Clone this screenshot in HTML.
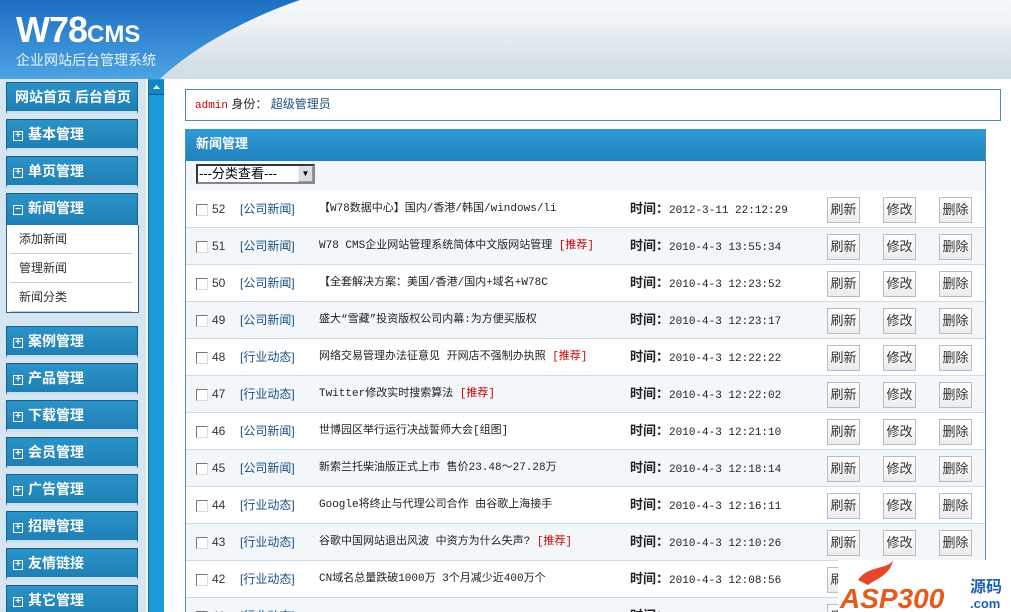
<!DOCTYPE html>
<html><head><meta charset="utf-8"><style>
*{margin:0;padding:0;box-sizing:border-box}
html{overflow:hidden;height:612px}
body{width:1011px;height:612px;overflow:hidden;background:#fff;font-family:"Liberation Sans","Noto Sans CJK SC",sans-serif;font-size:12px;position:relative}
.hdr{position:absolute;left:0;top:0;width:1011px;height:79px;background:linear-gradient(#f7f8f9,#eef2f5 30%,#dfe7ee 60%,#cfdde2)}
.blue{position:absolute;left:0;top:0;width:1011px;height:79px}
.logo{position:absolute;left:16px;top:9px;color:#fff;font-weight:bold;font-size:36px;font-family:"Liberation Sans",sans-serif;letter-spacing:-1px}
.logo small{font-size:24px;letter-spacing:0}
.sub{position:absolute;left:16px;top:50px;color:#eaf4fb;font-size:14px}
.side{position:absolute;left:0;top:79px;width:146px;height:533px;background:#d5e5f1}
.m{position:absolute;left:6px;width:132px;height:32px;background:linear-gradient(#2b93c8,#1f7fb5);border:1px solid #1a5f86;color:#fff;font-weight:bold;font-size:14px;line-height:28px;padding-left:6px;border-bottom:3px solid #c9e2f0}
.m i{font-style:normal;display:inline-block;width:10px;height:10px;border:1px solid #fff;font-size:10px;line-height:8px;text-align:center;margin-right:5px;vertical-align:1px}
.subm{position:absolute;left:6px;top:225px;width:133px;height:88px;background:#fff;border:1px solid #33667f;border-top:none}
.subm div{height:29px;line-height:28px;padding-left:8px;color:#333;border-bottom:1px solid #b8cfdc;margin:0 6px 0 4px;font-size:12px}
.sb{position:absolute;left:148px;top:79px;width:16px;height:533px;background:#1a9ad6;border-left:1px solid #0d6ea0}
.sb .up{position:absolute;left:0;top:1px;width:15px;height:15px;background:#0f87c5;border-bottom:1px solid #084f78}
.info{position:absolute;left:185px;top:89px;width:816px;height:32px;border:1px solid #4a8fa6;line-height:28px;padding-left:9px;font-size:12px;color:#1a4f7a}
.panel{position:absolute;left:185px;top:129px;width:801px;height:483px;border:1px solid #5d8ba8;border-top:none;border-bottom:none;overflow:hidden}
.ph{height:32px;background:linear-gradient(#2e9bd6,#1f82bd);color:#fff;font-weight:bold;font-size:13px;line-height:30px;padding-left:10px}
.sel{height:30px;background:#f3f6fa;padding:3px 0 0 10px}
.sel span{display:inline-block;width:119px;height:20px;border:2px inset #888;background:#fff;font-size:13px;line-height:16px;position:relative;padding-left:1px}
.sel span b{position:absolute;right:0;top:0;width:15px;height:16px;background:#ddd;border:1px outset #eee;font-size:8px;text-align:center;line-height:14px}
.row{position:absolute;left:0;width:800px;height:37px;border-bottom:1px solid #c8dde9;font-size:12px;line-height:36px;background:#fff}
.row:nth-child(even){background:#f4f7fa}
.row>*{position:absolute;top:0}
.cb{left:10px;top:13px!important;width:12px;height:12px;border:1px solid #777;border-right-color:#ddd;border-bottom-color:#ddd;background:#fff}
.n{left:26px;color:#333}
.c{left:54px;color:#1b4e84}
.t{left:133px;color:#222;font-family:"Liberation Mono","Noto Sans CJK SC",monospace}
.t,.t *{font-size:11px}
.r{color:#c00}
.tm{left:444px;color:#222;font-family:"Liberation Mono",monospace;font-size:11px}
.tm b{font-family:"Liberation Sans","Noto Sans CJK SC",sans-serif;font-size:13px}
.btn{top:6px!important;width:33px;height:26px;border:1px solid #bbb;background:linear-gradient(#fff,#ececec);line-height:24px;text-align:center;color:#333;font-size:13px}
.wm{position:absolute;left:838px;top:560px;width:173px;height:52px;background:#fff}
</style></head><body>
<div class="hdr"></div>
<svg class="blue" viewBox="0 0 1011 79"><defs><linearGradient id="g" x1="0" y1="0" x2="0" y2="1"><stop offset="0" stop-color="#1d6fc4"/><stop offset="1" stop-color="#4ca3e0"/></linearGradient></defs><path d="M0 0H300C255 15 195 45 160 79H0Z" fill="url(#g)"/></svg>
<div class="logo">W78<small>CMS</small></div>
<div class="sub">企业网站后台管理系统</div>
<div class="side"></div>
<div class="m" style="top:82px;font-size:14px;padding-left:8px">网站首页 后台首页</div>
<div class="m" style="top:119px"><i>+</i>基本管理</div>
<div class="m" style="top:156px"><i>+</i>单页管理</div>
<div class="m" style="top:193px;border-bottom:none"><i>−</i>新闻管理</div>
<div class="subm"><div>添加新闻</div><div>管理新闻</div><div>新闻分类</div></div>
<div class="m" style="top:326px"><i>+</i>案例管理</div>
<div class="m" style="top:363px"><i>+</i>产品管理</div>
<div class="m" style="top:400px"><i>+</i>下载管理</div>
<div class="m" style="top:437px"><i>+</i>会员管理</div>
<div class="m" style="top:474px"><i>+</i>广告管理</div>
<div class="m" style="top:511px"><i>+</i>招聘管理</div>
<div class="m" style="top:548px"><i>+</i>友情链接</div>
<div class="m" style="top:585px"><i>+</i>其它管理</div>
<div class="sb"><div class="up"><svg width="15" height="15"><path d="M4 9L7.5 5L11 9Z" fill="#fff"/></svg></div></div>
<div class="info"><span style="color:#c00;font-family:'Liberation Mono',monospace;font-size:11px">admin</span> <span style="color:#222">身份：</span> 超级管理员</div>
<div class="panel">
<div class="ph">新闻管理</div>
<div class="sel"><span>---分类查看---<b>▼</b></span></div>
<div style="position:absolute;left:0;top:62px">
<div class="row" style="top:0"><div class="cb"></div><span class="n">52</span><span class="c">[公司新闻]</span><span class="t">【W78数据中心】国内/香港/韩国/windows/li</span><span class="tm"><b>时间：</b>2012-3-11 22:12:29</span><span class="btn" style="left:641px">刷新</span><span class="btn" style="left:697px">修改</span><span class="btn" style="left:753px">删除</span></div>
<div class="row" style="top:37px"><div class="cb"></div><span class="n">51</span><span class="c">[公司新闻]</span><span class="t">W78 CMS企业网站管理系统简体中文版网站管理 <span class="r">[推荐]</span></span><span class="tm"><b>时间：</b>2010-4-3 13:55:34</span><span class="btn" style="left:641px">刷新</span><span class="btn" style="left:697px">修改</span><span class="btn" style="left:753px">删除</span></div>
<div class="row" style="top:74px"><div class="cb"></div><span class="n">50</span><span class="c">[公司新闻]</span><span class="t">【全套解决方案：美国/香港/国内+域名+W78C</span><span class="tm"><b>时间：</b>2010-4-3 12:23:52</span><span class="btn" style="left:641px">刷新</span><span class="btn" style="left:697px">修改</span><span class="btn" style="left:753px">删除</span></div>
<div class="row" style="top:111px"><div class="cb"></div><span class="n">49</span><span class="c">[公司新闻]</span><span class="t">盛大“雪藏”投资版权公司内幕:为方便买版权</span><span class="tm"><b>时间：</b>2010-4-3 12:23:17</span><span class="btn" style="left:641px">刷新</span><span class="btn" style="left:697px">修改</span><span class="btn" style="left:753px">删除</span></div>
<div class="row" style="top:148px"><div class="cb"></div><span class="n">48</span><span class="c">[行业动态]</span><span class="t">网络交易管理办法征意见 开网店不强制办执照 <span class="r">[推荐]</span></span><span class="tm"><b>时间：</b>2010-4-3 12:22:22</span><span class="btn" style="left:641px">刷新</span><span class="btn" style="left:697px">修改</span><span class="btn" style="left:753px">删除</span></div>
<div class="row" style="top:185px"><div class="cb"></div><span class="n">47</span><span class="c">[行业动态]</span><span class="t">Twitter修改实时搜索算法 <span class="r">[推荐]</span></span><span class="tm"><b>时间：</b>2010-4-3 12:22:02</span><span class="btn" style="left:641px">刷新</span><span class="btn" style="left:697px">修改</span><span class="btn" style="left:753px">删除</span></div>
<div class="row" style="top:222px"><div class="cb"></div><span class="n">46</span><span class="c">[公司新闻]</span><span class="t">世博园区举行运行决战誓师大会[组图]</span><span class="tm"><b>时间：</b>2010-4-3 12:21:10</span><span class="btn" style="left:641px">刷新</span><span class="btn" style="left:697px">修改</span><span class="btn" style="left:753px">删除</span></div>
<div class="row" style="top:259px"><div class="cb"></div><span class="n">45</span><span class="c">[公司新闻]</span><span class="t">新索兰托柴油版正式上市 售价23.48～27.28万</span><span class="tm"><b>时间：</b>2010-4-3 12:18:14</span><span class="btn" style="left:641px">刷新</span><span class="btn" style="left:697px">修改</span><span class="btn" style="left:753px">删除</span></div>
<div class="row" style="top:296px"><div class="cb"></div><span class="n">44</span><span class="c">[行业动态]</span><span class="t">Google将终止与代理公司合作 由谷歌上海接手</span><span class="tm"><b>时间：</b>2010-4-3 12:16:11</span><span class="btn" style="left:641px">刷新</span><span class="btn" style="left:697px">修改</span><span class="btn" style="left:753px">删除</span></div>
<div class="row" style="top:333px"><div class="cb"></div><span class="n">43</span><span class="c">[行业动态]</span><span class="t">谷歌中国网站退出风波 中资方为什么失声? <span class="r">[推荐]</span></span><span class="tm"><b>时间：</b>2010-4-3 12:10:26</span><span class="btn" style="left:641px">刷新</span><span class="btn" style="left:697px">修改</span><span class="btn" style="left:753px">删除</span></div>
<div class="row" style="top:370px"><div class="cb"></div><span class="n">42</span><span class="c">[行业动态]</span><span class="t">CN域名总量跌破1000万 3个月减少近400万个</span><span class="tm"><b>时间：</b>2010-4-3 12:08:56</span><span class="btn" style="left:641px">刷新</span><span class="btn" style="left:697px">修改</span><span class="btn" style="left:753px">删除</span></div>
<div class="row" style="top:407px"><div class="cb"></div><span class="n">41</span><span class="c">[行业动态]</span><span class="t">...</span><span class="tm"><b>时间：</b></span><span class="btn" style="left:641px">刷新</span><span class="btn" style="left:697px">修改</span><span class="btn" style="left:753px">删除</span></div>
</div>
</div>
<div class="wm"><svg width="173" height="52"><path d="M20 20C30 5 50 10 55 0C52 15 40 18 30 25Z" fill="#e8452a"/><text x="2" y="48" font-family="Liberation Sans" font-weight="bold" font-style="italic" font-size="28" fill="#e85a1a">ASP300</text><text x="132" y="32" font-family="Noto Sans CJK SC" font-weight="bold" font-size="16" fill="#1d62b8">源码</text><text x="132" y="48" font-family="Liberation Sans" font-weight="bold" font-size="13" fill="#1d62b8">.com</text></svg></div>
</body></html>
